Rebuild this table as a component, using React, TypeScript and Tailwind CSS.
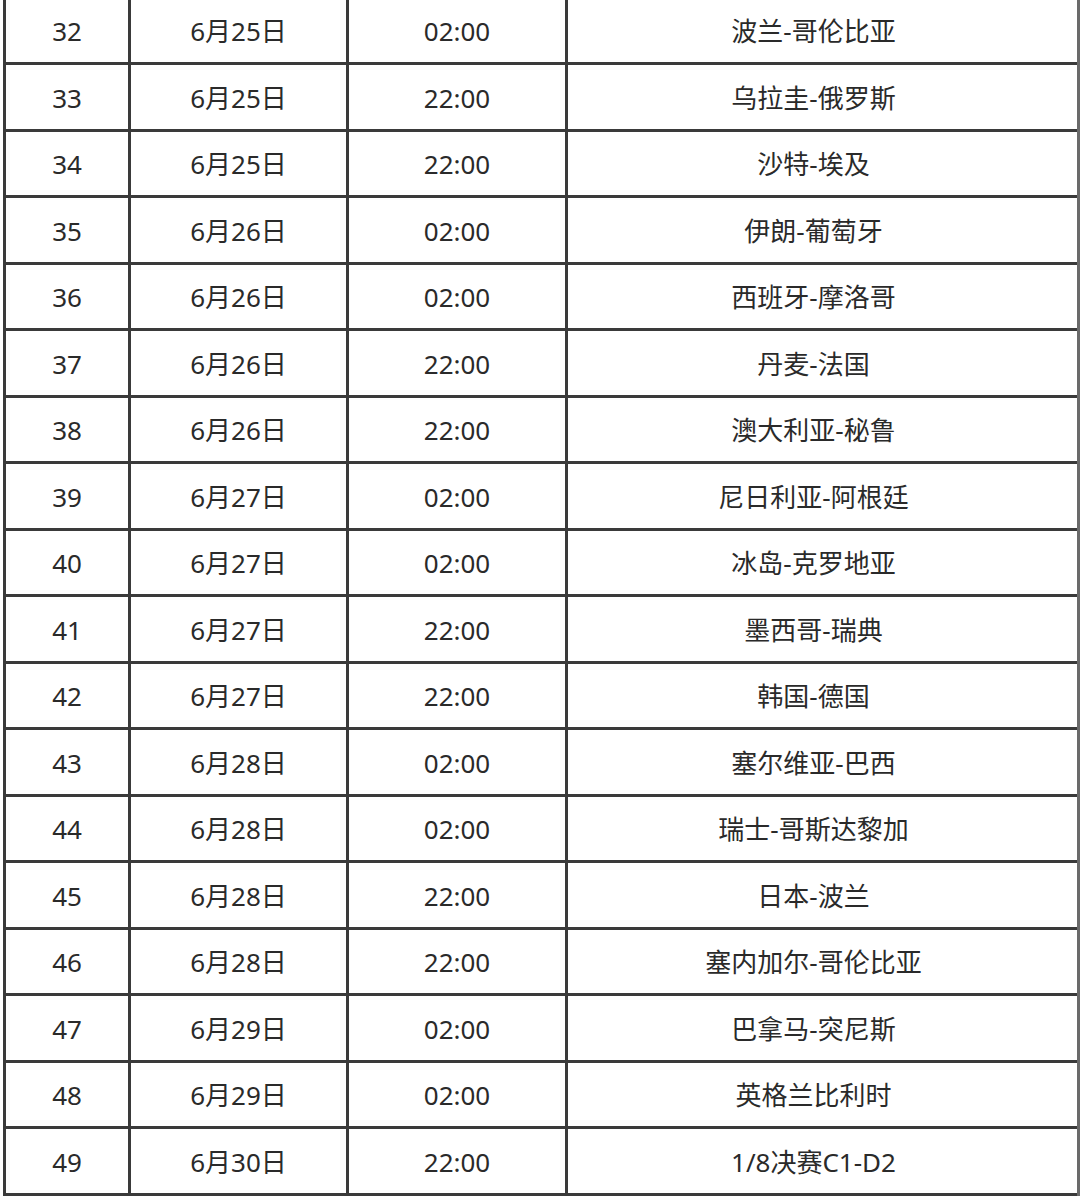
const rows: [number, string, string, string][] = [
  [32, '6月25日', '02:00', '波兰-哥伦比亚'],
  [33, '6月25日', '22:00', '乌拉圭-俄罗斯'],
  [34, '6月25日', '22:00', '沙特-埃及'],
  [35, '6月26日', '02:00', '伊朗-葡萄牙'],
  [36, '6月26日', '02:00', '西班牙-摩洛哥'],
  [37, '6月26日', '22:00', '丹麦-法国'],
  [38, '6月26日', '22:00', '澳大利亚-秘鲁'],
  [39, '6月27日', '02:00', '尼日利亚-阿根廷'],
  [40, '6月27日', '02:00', '冰岛-克罗地亚'],
  [41, '6月27日', '22:00', '墨西哥-瑞典'],
  [42, '6月27日', '22:00', '韩国-德国'],
  [43, '6月28日', '02:00', '塞尔维亚-巴西'],
  [44, '6月28日', '02:00', '瑞士-哥斯达黎加'],
  [45, '6月28日', '22:00', '日本-波兰'],
  [46, '6月28日', '22:00', '塞内加尔-哥伦比亚'],
  [47, '6月29日', '02:00', '巴拿马-突尼斯'],
  [48, '6月29日', '02:00', '英格兰比利时'],
  [49, '6月30日', '22:00', '1/8决赛C1-D2'],
];

export default function App() {
  return (
    <div
      className="w-[1080px] h-[1197px] overflow-hidden bg-white text-[26px] text-[#2a2a2a]"
      style={{ fontFamily: '"Noto Sans", "Noto Sans CJK SC", sans-serif' }}
    >
      {/* schedule table */}
      <div className="-mt-[1.5px] ml-[3px] w-[1077px] border-l-[3px] border-r-[3px] border-l-[#3a3a3a] border-r-[#6a6a6a]">
        {rows.map(([no, date, time, match]) => (
          <div
            key={no}
            className="flex h-[66.5px] pt-[3px] border-b-[3px] border-[#3a3a3a]"
          >
            <div className="w-[122px] flex items-center justify-center border-r-[3px] border-[#3a3a3a] box-content -mt-[3px] pt-[3px]">
              {no}
            </div>
            <div className="w-[215px] flex items-center justify-center border-r-[3px] border-[#3a3a3a] box-content -mt-[3px] pt-[3px]">
              {date}
            </div>
            <div className="w-[216px] flex items-center justify-center border-r-[3px] border-[#3a3a3a] box-content -mt-[3px] pt-[3px]">
              {time}
            </div>
            <div className="flex-1 flex items-center justify-center pr-[18px]">{match}</div>
          </div>
        ))}
      </div>
    </div>
  );
}
